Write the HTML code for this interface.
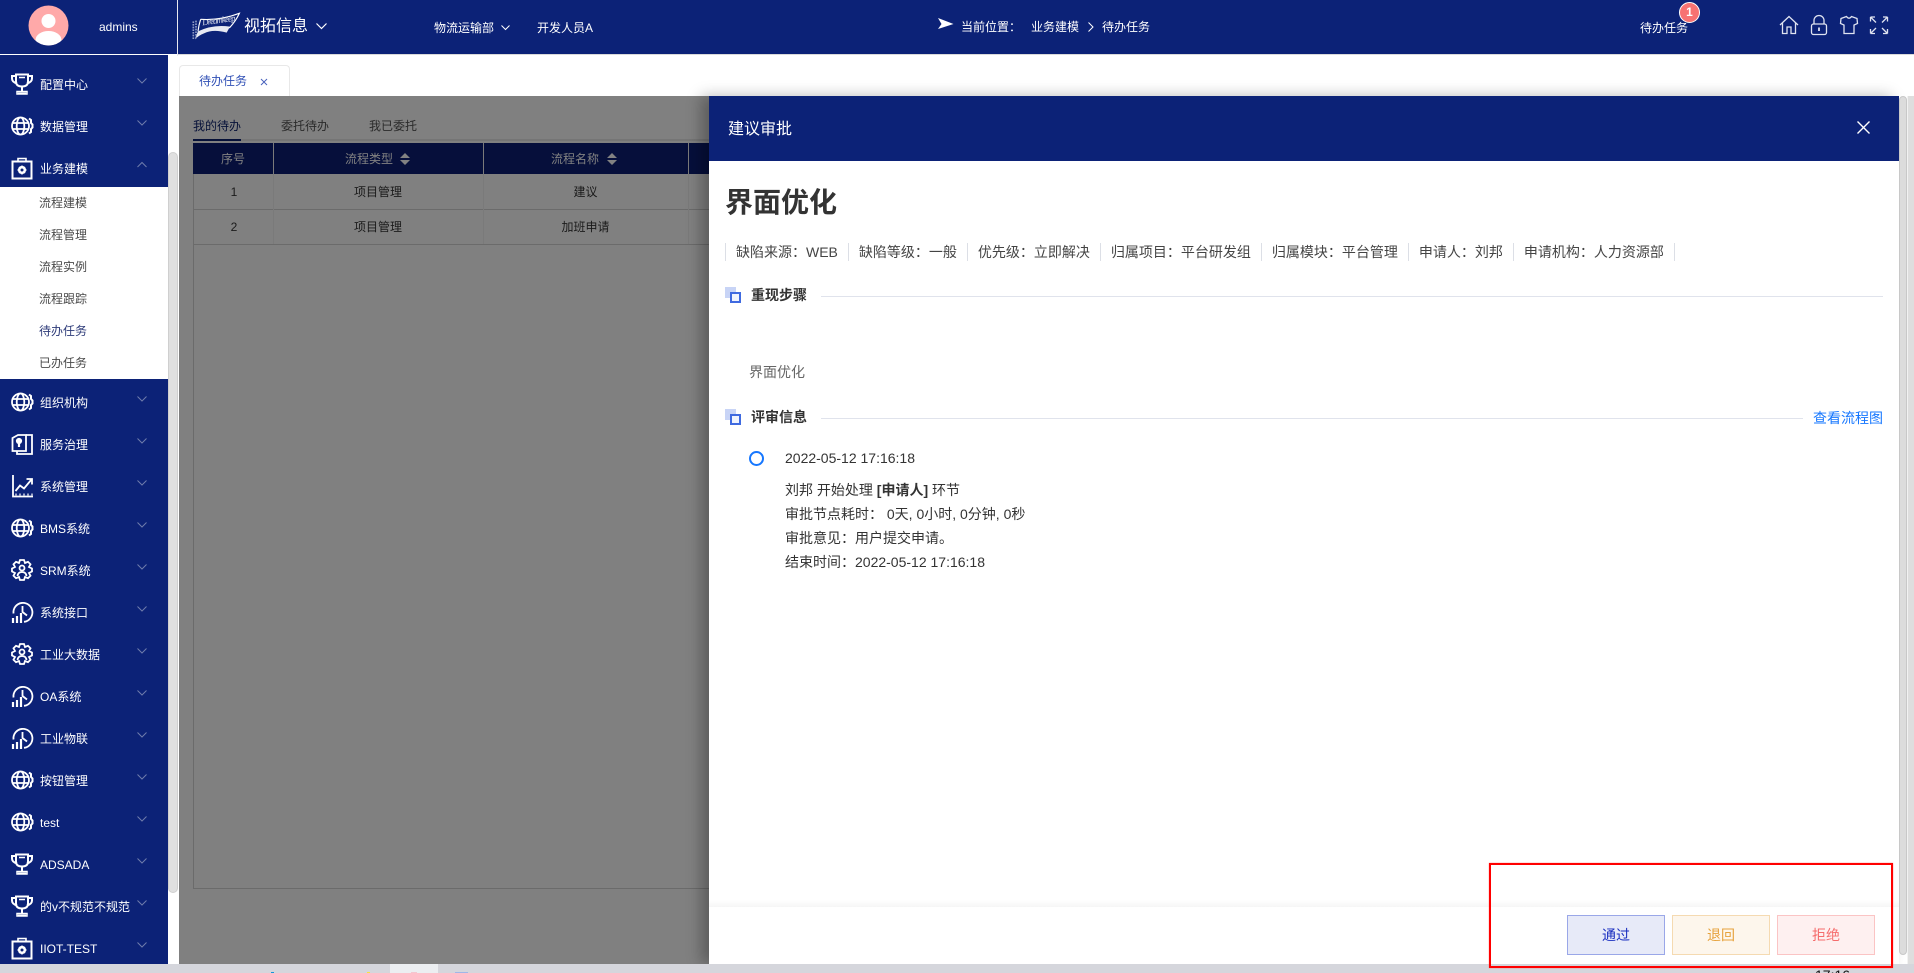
<!DOCTYPE html>
<html lang="zh-CN"><head><meta charset="utf-8"><title>待办任务</title>
<style>
*{box-sizing:border-box;margin:0;padding:0}
html,body{width:1914px;height:973px;overflow:hidden;background:#fff;font-family:"Liberation Sans","Noto Sans CJK SC",sans-serif;font-size:12px}
.a{position:absolute;white-space:nowrap;line-height:20px;height:20px}
.box{position:absolute}
.m{color:#fff;left:40px}
.s{color:#4a4a4a;left:39px}
.h{color:#fff}
svg{position:absolute;overflow:visible}
.ic{left:11px;width:22px;height:22px;color:#fff}
.ch{left:137px;width:10px;height:6px}
.g{color:#1a1a1a;text-align:center}
.th{color:#828282}
.d{color:#333;font-size:14px}
.btn{position:absolute;top:915px;width:98px;height:40px;font-size:14px;line-height:38px;text-align:center;border:1px solid}
.meta{position:absolute;top:243px;left:725px;height:20px;display:flex;font-size:14px;line-height:20px;color:#444;white-space:nowrap}
.meta span{padding:0 10px;border-left:1px solid #dcdfe6;height:18px;line-height:18px}
.meta span:last-child{border-right:1px solid #dcdfe6}
</style></head><body>
<svg width="0" height="0" style="position:absolute"><defs>
<g id="t" fill="none" stroke="currentColor" stroke-width="2"><path d="M5 1.500H17V8.500Q17 13.500 11 13.500Q5 13.500 5 8.500Z"/><path d="M5 3H1V5.500Q1 9 6 10.500M17 3H21V5.500Q21 9 16 10.500"/><path d="M11 13.500V18M7 20.500H15" /><path d="M8 4.500H14" stroke-width="1.500"/><path d="M6 18.500H16V21H6Z" stroke-width="1.500"/></g>
<g id="w" fill="none" stroke="currentColor" stroke-width="1.800"><circle cx="9.500" cy="11" r="8.500"/><ellipse cx="9.500" cy="11" rx="3.800" ry="8.500"/><path d="M1.500 8H17.500M1.500 14H17.500"/><path d="M18 3.500L20 5V8L21.500 9.500V12.500L20 14V17L18 18.500" stroke-width="2"/></g>
<g id="c" fill="none" stroke="currentColor" stroke-width="2"><rect x="1.500" y="4.500" width="19" height="17"/><path d="M7 4.500V1.500H15V4.500" stroke-width="1.600"/><circle cx="11" cy="13" r="2.800" stroke-width="2.600"/><path d="M11 8.500V10M11 16V17.500M6.500 13H8M14 13H15.500M8 10L9 11M13 15L14 16M14 10L13 11M9 15L8 16" stroke-width="1.400"/></g>
<g id="o" fill="none" stroke="currentColor" stroke-width="1.800"><path d="M1.500 5L7 2H15V18H1.500Z"/><path d="M15 2H21V21H6V18"/><circle cx="8" cy="8" r="2.200" fill="currentColor"/><path d="M8 9V14" stroke-width="2.200"/></g>
<g id="l" fill="none" stroke="currentColor" stroke-width="1.800"><path d="M2 0V21.500H22"/><path d="M4.500 16L9 10.500L13 13.500L20.500 4.500"/><path d="M15.500 4H21V9.500"/><path d="M5 18.500V20.500M9 18.500V20.500M13 18.500V20.500M17 18.500V20.500M21 18.500V20.500" stroke-width="1.200"/></g>
<g id="p" fill="none" stroke="currentColor" stroke-width="1.800"><path d="M9 1H13L14 4L17 2.800L19.500 5.300L18 8L21 9.500V12.500L18 14L19.500 16.700L17 19.200L14 18L13 21H9L8 18L5 19.200L2.500 16.700L4 14L1 12.500V9.500L4 8L2.500 5.300L5 2.800L8 4Z"/><circle cx="11" cy="9" r="2.500"/><path d="M6.500 17Q7 13 11 13Q15 13 15.500 17"/></g>
<g id="k" fill="none" stroke="currentColor" stroke-width="1.800"><path d="M2.500 12.500A9.500 9.500 0 1 1 13 20.800"/><path d="M11.500 5V11L16 14.500"/><path d="M2 17V22M6 15V22M10 12V22" stroke-width="2.200"/></g>
<polyline id="v" points="0.500,0.500 5,5 9.500,0.500" fill="none" stroke="#6f7cab" stroke-width="1"/>
<polyline id="u" points="0.500,5 5,0.500 9.500,5" fill="none" stroke="#6f7cab" stroke-width="1"/>
</defs></svg>

<!-- header -->
<div class="box" style="left:0;top:0;width:1914px;height:54px;background:#0c2277"></div>
<div class="box" style="left:0;top:54px;width:178px;height:1px;background:#fff"></div>
<div class="box" style="left:178px;top:54px;width:1736px;height:1px;background:#d9d9d9"></div>
<div class="box" style="left:177px;top:0;width:1px;height:56px;background:#e8e8f0"></div>
<svg style="left:28px;top:5px" width="41" height="41" viewBox="0 0 41 41"><defs><clipPath id="av"><circle cx="20.500" cy="20.500" r="20"/></clipPath></defs><circle cx="20.500" cy="20.500" r="20" fill="#ffa9a9"/><g clip-path="url(#av)" fill="#fff"><circle cx="20.500" cy="16" r="7"/><ellipse cx="20.500" cy="35" rx="13" ry="9"/></g></svg>
<div class="a h" style="left:99px;top:17px;font-size:12px">admins</div>

<svg style="left:180px;top:0" width="150" height="54" viewBox="0 0 450 162">
<g fill="none" stroke="#fff"><path d="M62 58Q120 62 178 40Q168 62 148 84" stroke-width="3.500"/><path d="M62 58Q56 76 54 94" stroke-width="3.500"/></g>
<path d="M54 94Q100 72 150 80L140 98Q100 86 72 100Q56 106 45 118Q48 105 54 94Z" fill="#fff" opacity=".9"/>
<path d="M40 64V120M48 62V116" stroke="#8d99c4" stroke-width="5" stroke-dasharray="5 3" fill="none"/>
<text x="68" y="76" font-family="Liberation Serif,serif" font-style="italic" font-size="26" fill="#fff" opacity=".85" transform="rotate(-8 68 76)" textLength="100">Dreamkeep</text></svg>
<div class="a h" style="left:244px;top:17px;font-size:16px">视拓信息</div>
<svg style="left:316px;top:23px" width="11" height="7"><polyline points="0.500,0.500 5.500,5.500 10.500,0.500" fill="none" stroke="#fff" stroke-width="1.200"/></svg>
<div class="a h" style="left:434px;top:18px">物流运输部</div>
<svg style="left:501px;top:25px" width="9" height="6"><polyline points="0.500,0.500 4.500,4.500 8.500,0.500" fill="none" stroke="#fff" stroke-width="1"/></svg>
<div class="a h" style="left:537px;top:18px">开发人员A</div>

<svg style="left:938px;top:18px" width="16" height="12"><polygon points="0,0 15.500,6 0,11 3.500,6" fill="#fff"/></svg>
<div class="a h" style="left:961px;top:17px">当前位置：</div>
<div class="a h" style="left:1031px;top:17px">业务建模</div>
<svg style="left:1088px;top:22px" width="6" height="10"><polyline points="0.500,0.500 5,5 0.500,9.500" fill="none" stroke="#fff" stroke-width="1"/></svg>
<div class="a h" style="left:1102px;top:17px">待办任务</div>

<div class="a h" style="left:1640px;top:18px">待办任务</div>
<div class="box" style="left:1679px;top:2px;width:21px;height:21px;border-radius:50%;background:#f77272;border:1px solid #fff;color:#fff;font-weight:bold;font-size:12px;line-height:19px;text-align:center">1</div>
<svg style="left:1770px;top:0" width="144" height="54" viewBox="0 0 144 54" fill="none" stroke="#dfe3f0" stroke-width="1.300">
<path d="M10 25L19 16.500L28 25M12.500 23V33.500H17V27H21V33.500H25.500V23"/>
<rect x="41.500" y="24" width="15" height="10.500" rx="2"/><path d="M44 24V20.500a5 5 0 0 1 10 0V24"/><path d="M49 27.500V31" stroke-width="1.800"/>
<path d="M76.500 16.500L71 18.500L70.500 23.500L74 25V33.500H84V25L87.500 23.500L87 18.500L81.500 16.500Q79 20 76.500 16.500Z"/>
<path d="M100.500 17H105M100.500 17V21.500M100.500 17L106 22.500M117.500 17H113M117.500 17V21.500M117.500 17L112 22.500M100.500 33.500H105M100.500 33.500V29M100.500 33.500L106 28M117.500 33.500H113M117.500 33.500V29M117.500 33.500L112 28"/>
</svg>

<!-- sidebar -->
<div class="box" style="left:0;top:55px;width:168px;height:909px;background:#0c2277"></div>
<div class="box" style="left:0;top:187px;width:168px;height:192px;background:#fff"></div>
<div class="box" style="left:168px;top:55px;width:10px;height:909px;background:#fff;border-radius:5px 5px 5px 5px"></div>
<div class="box" style="left:168px;top:152px;width:10px;height:741px;background:#e0e0e0;border:1px solid #cfcfcf;border-radius:5px"></div>

<svg class="ic" style="top:73px"><use href="#t"/></svg><div class="a m" style="top:75px">配置中心</div><svg class="ch" style="top:78px"><use href="#v"/></svg>
<svg class="ic" style="top:115px"><use href="#w"/></svg><div class="a m" style="top:117px">数据管理</div><svg class="ch" style="top:120px"><use href="#v"/></svg>
<svg class="ic" style="top:157px"><use href="#c"/></svg><div class="a m" style="top:159px">业务建模</div><svg class="ch" style="top:162px"><use href="#u"/></svg>

<div class="a s" style="top:193px">流程建模</div>
<div class="a s" style="top:225px">流程管理</div>
<div class="a s" style="top:257px">流程实例</div>
<div class="a s" style="top:289px">流程跟踪</div>
<div class="a s" style="top:321px;color:#2c3a78">待办任务</div>
<div class="a s" style="top:353px">已办任务</div>

<svg class="ic" style="top:391px"><use href="#w"/></svg><div class="a m" style="top:393px">组织机构</div><svg class="ch" style="top:396px"><use href="#v"/></svg>
<svg class="ic" style="top:433px"><use href="#o"/></svg><div class="a m" style="top:435px">服务治理</div><svg class="ch" style="top:438px"><use href="#v"/></svg>
<svg class="ic" style="top:475px"><use href="#l"/></svg><div class="a m" style="top:477px">系统管理</div><svg class="ch" style="top:480px"><use href="#v"/></svg>
<svg class="ic" style="top:517px"><use href="#w"/></svg><div class="a m" style="top:519px">BMS系统</div><svg class="ch" style="top:522px"><use href="#v"/></svg>
<svg class="ic" style="top:559px"><use href="#p"/></svg><div class="a m" style="top:561px">SRM系统</div><svg class="ch" style="top:564px"><use href="#v"/></svg>
<svg class="ic" style="top:601px"><use href="#k"/></svg><div class="a m" style="top:603px">系统接口</div><svg class="ch" style="top:606px"><use href="#v"/></svg>
<svg class="ic" style="top:643px"><use href="#p"/></svg><div class="a m" style="top:645px">工业大数据</div><svg class="ch" style="top:648px"><use href="#v"/></svg>
<svg class="ic" style="top:685px"><use href="#k"/></svg><div class="a m" style="top:687px">OA系统</div><svg class="ch" style="top:690px"><use href="#v"/></svg>
<svg class="ic" style="top:727px"><use href="#k"/></svg><div class="a m" style="top:729px">工业物联</div><svg class="ch" style="top:732px"><use href="#v"/></svg>
<svg class="ic" style="top:769px"><use href="#w"/></svg><div class="a m" style="top:771px">按钮管理</div><svg class="ch" style="top:774px"><use href="#v"/></svg>
<svg class="ic" style="top:811px"><use href="#w"/></svg><div class="a m" style="top:813px">test</div><svg class="ch" style="top:816px"><use href="#v"/></svg>
<svg class="ic" style="top:853px"><use href="#t"/></svg><div class="a m" style="top:855px">ADSADA</div><svg class="ch" style="top:858px"><use href="#v"/></svg>
<svg class="ic" style="top:895px"><use href="#t"/></svg><div class="a m" style="top:897px">的v不规范不规范</div><svg class="ch" style="top:900px"><use href="#v"/></svg>
<svg class="ic" style="top:937px"><use href="#c"/></svg><div class="a m" style="top:939px">IIOT-TEST</div><svg class="ch" style="top:942px"><use href="#v"/></svg>

<!-- tab row -->
<div class="box" style="left:179px;top:65px;width:111px;height:32px;background:#fff;border:1px solid #e8e8e8;border-bottom:0;border-radius:4px 4px 0 0"></div>
<div class="a" style="left:199px;top:71px;color:#2f4fb5">待办任务</div>
<svg style="left:260px;top:78px" width="8" height="8"><path d="M1 1L7 7M7 1L1 7" stroke="#4a63bd" stroke-width="1" fill="none"/></svg>

<!-- dimmed content -->
<div class="box" style="left:179px;top:96px;width:1735px;height:868px;background:#808080"></div>
<div class="box" style="left:193px;top:139px;width:520px;height:2px;background:#757575"></div>
<div class="box" style="left:193px;top:139px;width:48px;height:2px;background:#061138"></div>
<div class="a" style="left:193px;top:116px;color:#061138">我的待办</div>
<div class="a" style="left:281px;top:116px;color:#2a2a2a">委托待办</div>
<div class="a" style="left:369px;top:116px;color:#2a2a2a">我已委托</div>

<div class="box" style="left:193px;top:143px;width:520px;height:31px;background:#060f3b"></div>
<div class="box" style="left:193px;top:174px;width:1px;height:714px;background:#6b6b6b"></div>
<div class="box" style="left:193px;top:888px;width:520px;height:1px;background:#6b6b6b"></div>
<div class="box" style="left:193px;top:209px;width:520px;height:1px;background:#6b6b6b"></div>
<div class="box" style="left:193px;top:244px;width:520px;height:1px;background:#6b6b6b"></div>
<div class="box" style="left:273px;top:143px;width:1px;height:101px;background:#7a7a7a"></div>
<div class="box" style="left:483px;top:143px;width:1px;height:101px;background:#7a7a7a"></div>
<div class="box" style="left:688px;top:143px;width:1px;height:101px;background:#7a7a7a"></div>

<div class="a th" style="left:221px;top:149px">序号</div>
<div class="a th" style="left:345px;top:149px">流程类型</div>
<svg style="left:400px;top:153px" width="10" height="12"><path d="M0 5L5 0L10 5ZM0 7H10L5 12Z" fill="#828282"/></svg>
<div class="a th" style="left:551px;top:149px">流程名称</div>
<svg style="left:607px;top:153px" width="10" height="12"><path d="M0 5L5 0L10 5ZM0 7H10L5 12Z" fill="#828282"/></svg>
<div class="a g" style="left:194px;width:80px;top:182px">1</div>
<div class="a g" style="left:273px;width:210px;top:182px">项目管理</div>
<div class="a g" style="left:483px;width:205px;top:182px">建议</div>
<div class="a g" style="left:194px;width:80px;top:217px">2</div>
<div class="a g" style="left:273px;width:210px;top:217px">项目管理</div>
<div class="a g" style="left:483px;width:205px;top:217px">加班申请</div>

<!-- drawer -->
<div class="box" style="left:709px;top:96px;width:1205px;height:868px;background:#fff"></div>
<div class="box" style="left:709px;top:96px;width:1190px;height:868px;background:#fff;box-shadow:-8px 0 14px rgba(0,0,0,.28)"></div>
<div class="box" style="left:709px;top:96px;width:1190px;height:65px;background:#0c2277"></div>
<div class="a" style="left:728px;top:120px;font-size:16px;color:#fff">建议审批</div>
<svg style="left:1857px;top:121px" width="13" height="13"><path d="M0.500 0.500L12.500 12.500M12.500 0.500L0.500 12.500" stroke="#fff" stroke-width="1.400" fill="none"/></svg>

<div class="box" style="left:1899px;top:96px;width:8px;height:859px;background:#dcdcdc;border:1px solid #c8c8c8;border-radius:4px"></div>
<div class="box" style="left:1907px;top:96px;width:7px;height:868px;background:#dedede;border-left:1px solid #f2f2f2"></div>

<div class="a" style="left:725px;top:184px;height:38px;line-height:38px;font-size:28px;font-weight:bold;color:#333">界面优化</div>
<div class="meta">
<span>缺陷来源：WEB</span><span>缺陷等级：一般</span><span>优先级：立即解决</span><span>归属项目：平台研发组</span><span>归属模块：平台管理</span><span>申请人：刘邦</span><span>申请机构：人力资源部</span>
</div>

<div class="box" style="left:725px;top:287px;width:11px;height:11px;background:#c8d4f6"></div>
<div class="box" style="left:730px;top:292px;width:11px;height:11px;background:#f0f4fe;border:2px solid #3f6ae0"></div>
<div class="a d" style="left:751px;top:285px;font-weight:bold">重现步骤</div>
<div class="box" style="left:821px;top:296px;width:1062px;height:1px;background:#e0e3ec"></div>
<div class="a" style="left:749px;top:362px;font-size:14px;color:#666">界面优化</div>

<div class="box" style="left:725px;top:409px;width:11px;height:11px;background:#c8d4f6"></div>
<div class="box" style="left:730px;top:414px;width:11px;height:11px;background:#f0f4fe;border:2px solid #3f6ae0"></div>
<div class="a d" style="left:751px;top:407px;font-weight:bold">评审信息</div>
<div class="box" style="left:821px;top:418px;width:982px;height:1px;background:#e0e3ec"></div>
<div class="a" style="left:1813px;top:408px;font-size:14px;color:#1677ff">查看流程图</div>

<div class="box" style="left:749px;top:451px;width:15px;height:15px;border-radius:50%;border:2px solid #1677ff;background:#fff"></div>
<div class="a d" style="left:785px;top:448px">2022-05-12 17:16:18</div>
<div class="a d" style="left:785px;top:480px">刘邦 开始处理 <b>[申请人]</b> 环节</div>
<div class="a d" style="left:785px;top:504px">审批节点耗时：&nbsp;0天, 0小时, 0分钟, 0秒</div>
<div class="a d" style="left:785px;top:528px">审批意见：用户提交申请。</div>
<div class="a d" style="left:785px;top:552px">结束时间：2022-05-12 17:16:18</div>

<div class="box" style="left:709px;top:900px;width:1190px;height:7px;background:linear-gradient(#fff,#f6f6f6)"></div>
<div class="btn" style="left:1567px;background:#e7eaf8;border-color:#9aa7e8;color:#1a2fc0">通过</div>
<div class="btn" style="left:1672px;background:#fdf6ec;border-color:#f5dab1;color:#e6a23c">退回</div>
<div class="btn" style="left:1777px;background:#fef0f0;border-color:#fbc4c4;color:#f56c6c">拒绝</div>

<!-- taskbar -->
<div class="box" style="left:0;top:964px;width:1914px;height:9px;background:#d5d6dc;overflow:hidden">
<div class="box" style="left:390px;top:0;width:48px;height:9px;background:#eceef1"></div>
<div class="box" style="left:271px;top:8px;width:3px;height:2px;background:#1296db"></div>
<div class="box" style="left:367px;top:8px;width:3px;height:2px;background:#f7e23e"></div>
<div class="box" style="left:411px;top:8px;width:6px;height:2px;background:#f3c6d0"></div>
<div class="box" style="left:455px;top:8px;width:13px;height:2px;background:#9fb6e8"></div>
<div class="a" style="left:1815px;top:1px;font-size:14px;color:#111;line-height:20px">17:16</div>
</div>

<div class="box" style="left:1489px;top:863px;width:404px;height:105px;border:2px solid #f00;box-shadow:0 0 1px #f66"></div>
</body></html>
